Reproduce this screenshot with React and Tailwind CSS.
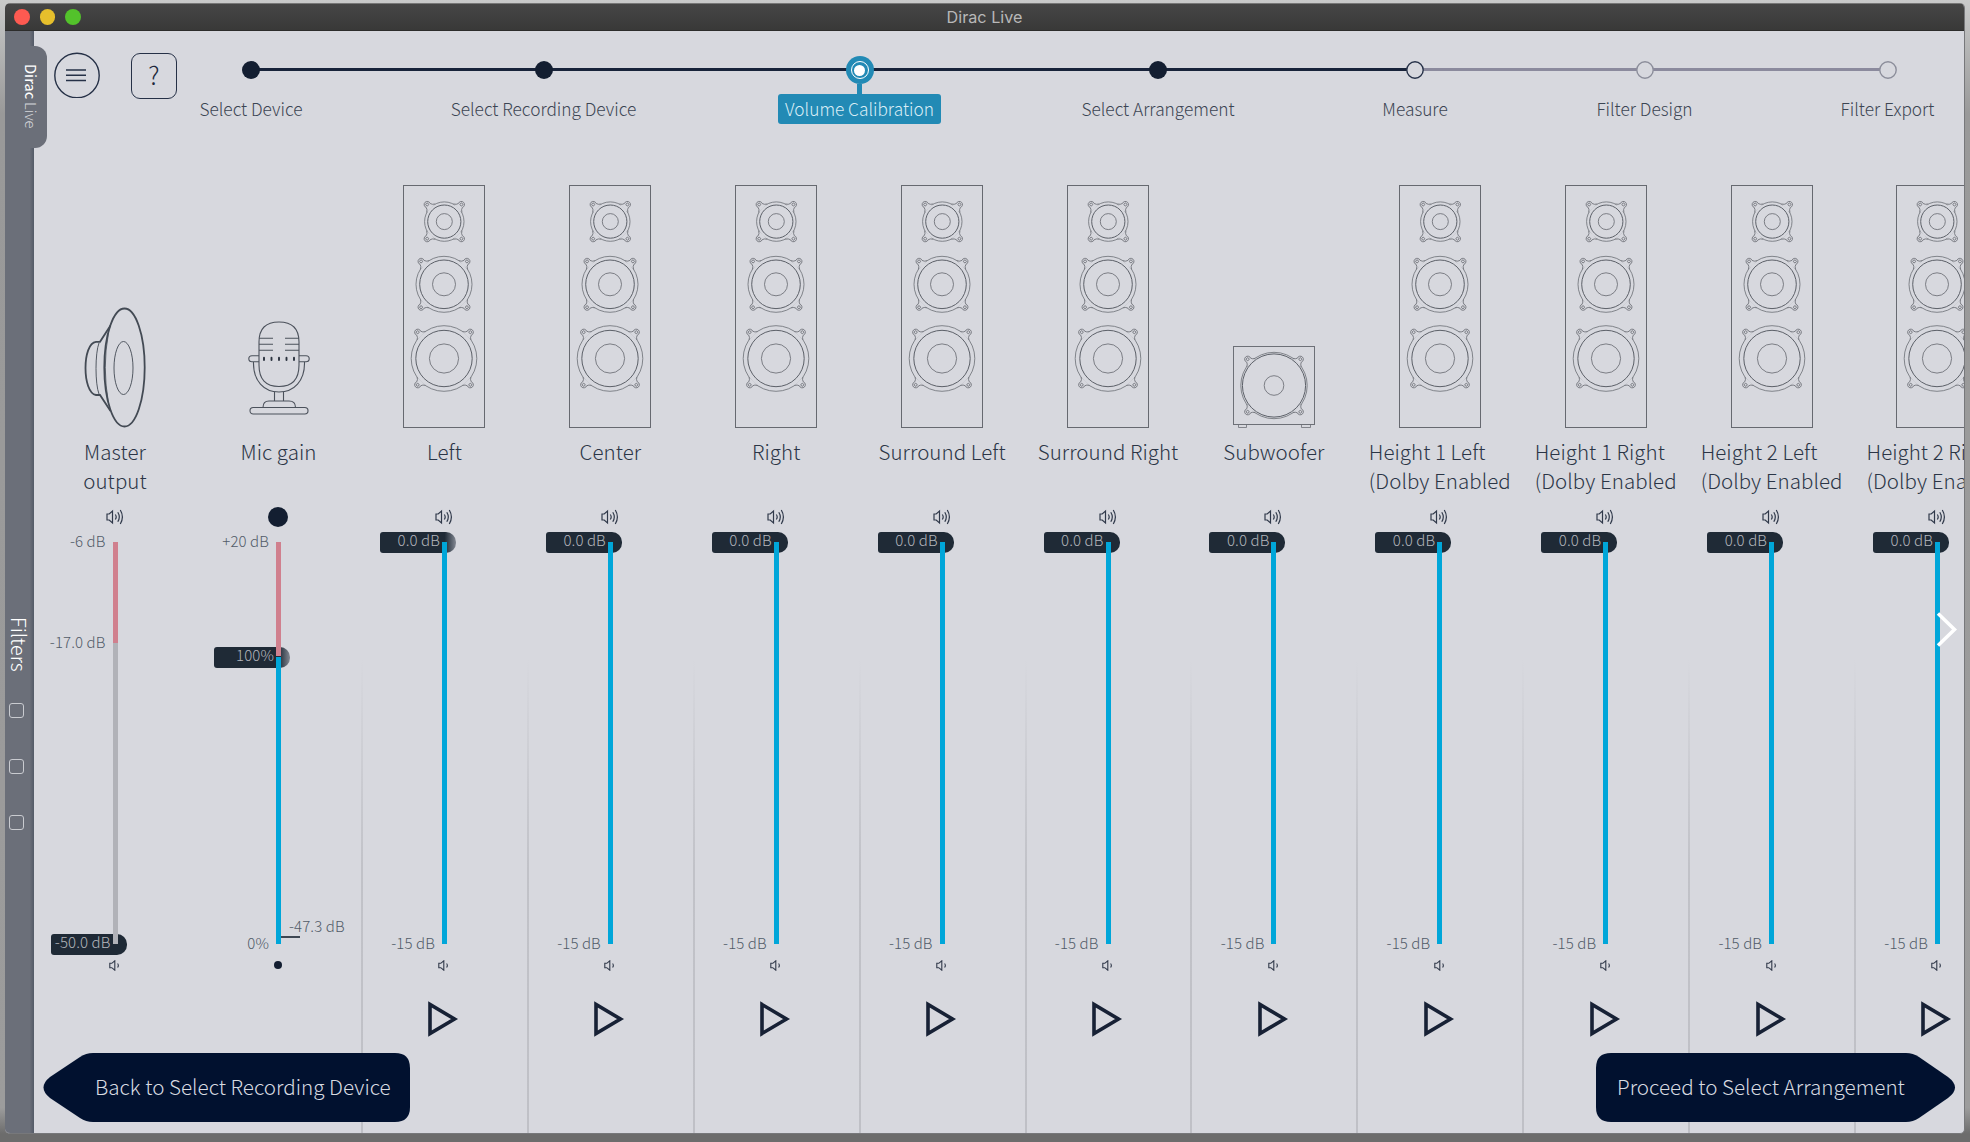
import React from "react";

const BG = "#d7d8de";

const steps = [
  { label: "Select Device", gap: 0, state: "done" },
  { label: "Select Recording Device", gap: 292.5, state: "done" },
  { label: "Volume Calibration", gap: 316, state: "active" },
  { label: "Select Arrangement", gap: 298.5, state: "done" },
  { label: "Measure", gap: 257, state: "next" },
  { label: "Filter Design", gap: 229.5, state: "todo" },
  { label: "Filter Export", gap: 243, state: "todo" },
];

const channels = [
  { name: "Left" },
  { name: "Center" },
  { name: "Right" },
  { name: "Surround Left" },
  { name: "Surround Right" },
  { name: "Subwoofer", sub: true },
  { name: "Height 1 Left", second: "(Dolby Enabled" },
  { name: "Height 1 Right", second: "(Dolby Enabled" },
  { name: "Height 2 Left", second: "(Dolby Enabled" },
  { name: "Height 2 Right", second: "(Dolby Enabled" },
];

function Driver({ cx, cy, inner, mid, outer, ear }) {
  const a = outer - 0.8;
  const e = ear - 1.4;
  const d = `M${a} -6 Q${outer + 0.8} -3.2 ${e} -2.8 A3.1 3.1 0 1 1 ${e} 2.8 Q${outer + 0.8} 3.2 ${a} 6`;
  return (
    <g transform={`translate(${cx} ${cy})`} fill="none" stroke="#6a6d74" strokeWidth="0.8">
      <circle r={outer} />
      {[45, 135, 225, 315].map((r) => (
        <g key={r} transform={`rotate(${r})`}>
          <path d={d} fill={BG} />
          <circle cx={ear} cy="0" r="1.4" />
        </g>
      ))}
      <circle r={mid} strokeWidth="1" stroke="#5c6068" />
      <circle r={inner} strokeWidth="0.85" />
    </g>
  );
}

function Tower() {
  return (
    <svg width="84" height="243" viewBox="0 0 84 243">
      <rect x="1.5" y="0.5" width="81" height="242" fill="none" stroke="#666970" />
      <Driver cx={42.3} cy={36.6} inner={8} mid={16.6} outer={19.7} ear={24.2} />
      <Driver cx={42} cy={99.3} inner={11.5} mid={24.3} outer={28} ear={32.4} />
      <Driver cx={42} cy={173.5} inner={14.6} mid={28.2} outer={32.8} ear={37.2} />
    </svg>
  );
}

function Sub() {
  return (
    <svg width="84" height="243" viewBox="0 0 84 243">
      <g fill="none" stroke="#6d7077">
        <rect x="1.5" y="161.5" width="81" height="78" />
        <path d="M6.500 239.500v3h8v-3M69.500 239.500v3h9v-3" strokeWidth="0.8" />
      </g>
      <Driver cx={42} cy={200.5} inner={9.8} mid={31.6} outer={33.2} ear={37.2} />
    </svg>
  );
}

function MasterIcon() {
  return (
    <svg width="62" height="121" viewBox="0 0 62 121" fill="none" stroke="#434a54" strokeWidth="1.8">
      <ellipse cx="40.500" cy="60.500" rx="20.200" ry="59" />
      <ellipse cx="39.500" cy="61" rx="9.500" ry="26.500" strokeWidth="0.9" />
      <path d="M26.500 18.500L16 34.800H12C-2 36-2 86 12 88H16L26.500 104" />
      <path d="M15 36C11 46 11 77 15 87" strokeWidth="0.9" />
      <path d="M24.500 26Q18 60 24.500 96" strokeWidth="0.8" />
    </svg>
  );
}

function MicIcon() {
  return (
    <svg className="mb-[13px]" width="62" height="94" viewBox="0 0 62 94" fill="none" stroke="#4b515b" strokeWidth="1.100">
      <path d="M11 21Q11 1 31 1T51 21V44Q51 65.500 31 65.500T11 44Z" />
      <path d="M11 17.200h14M11 23.200h14M11 29.200h14M37 17.200h14M37 23.200h14M37 29.200h14" />
      <path d="M16 36.800v2.200M23.500 36.800v2.200M31 36.800v2.200M38.500 36.800v2.200M46 36.800v2.200" strokeWidth="1.900" strokeLinecap="round" stroke="#2b333f" />
      <path d="M11 34.800H4Q.8 34.800.8 37.800T4 40.800H11M51 34.800h7q3.200 0 3.200 3t-3.200 3h-7" />
      <path d="M5.500 41C5 60 16 71 31 71S57 60 56.500 41" />
      <path d="M26.500 71v9M35.500 71v9M15 86.500Q15 80 21 80H41Q47.500 80 47.500 86.500" />
      <rect x="2" y="86.500" width="58" height="6.500" rx="3.200" />
    </svg>
  );
}

function VolHigh() {
  return (
    <svg width="18" height="16" viewBox="0 0 18 16" fill="none" stroke="#30394a" strokeWidth="1.200">
      <path d="M1 5h2.200L6.500 2v12L3.200 11H1z" />
      <path d="M9.300 5.500q1.800 2.500 0 5M11.800 3.200q3 4.800 0 9.600M14.300 1q4.200 7 0 14" />
    </svg>
  );
}

function VolLow() {
  return (
    <svg width="11" height="11" viewBox="0 0 11 11" fill="none" stroke="#30394a" strokeWidth="1.100">
      <path d="M.8 3.300h2L5.800.8v9.400L2.800 7.700H.8zM8.600 3.500q1.500 2 0 4" />
    </svg>
  );
}

const dbText = "absolute right-[12px] text-[15px] leading-5 whitespace-nowrap tracking-[0.1px] text-[#515b68]";

function Thumb({ top, text, soft }) {
  return (
    <div
      className={
        "absolute right-[-9px] h-[21px] w-[76px] rounded-l-[3px] rounded-r-[10px] " +
        (soft ? "bg-linear-to-r from-[#1f2a36] from-85% to-[#848993]" : "bg-[#1f2a36]")
      }
      style={{ top }}
    >
      <span className="absolute right-[16px] top-[-2px] text-[15px] leading-5 tracking-[0.1px] whitespace-nowrap text-[#b4b6bc]">{text}</span>
    </div>
  );
}

function Slider({ children, bar }) {
  return (
    <div className="relative mt-[15px] flex h-[402px] w-[5px] flex-col">
      {children}
      {bar}
    </div>
  );
}

function Column({ icon, label, top, slider, low, play }) {
  return (
    <div className="flex min-w-0 flex-1 flex-col items-center pr-px">
      <div className="flex h-[243px] items-end">{icon}</div>
      <div className="mt-[9px] h-[60px] text-[20.500px] leading-[29px] tracking-[0.05px] whitespace-nowrap text-[#2b3546]">{label}</div>
      <div className="mt-[10px] mr-px flex h-[20px] items-center">{top}</div>
      {slider}
      <div className="mt-[11px] mr-px flex h-[20px] items-center">{low}</div>
      {play}
    </div>
  );
}

function Channel({ ch, soft }) {
  return (
    <div className="flex w-[165.9px] shrink-0">
      <div className="w-[2px] shrink-0 bg-linear-to-b from-transparent from-50% via-[#c1c2c8] via-72% to-[#bfc0c6]" />
      <Column
        icon={ch.sub ? <Sub /> : <Tower />}
        label={
          <>
            <div>{ch.name}</div>
            {ch.second && <div>{ch.second}</div>}
          </>
        }
        top={<VolHigh />}
        slider={
          <Slider bar={<div className="relative h-full w-full bg-[#00a6d9]" />}>
            <Thumb top={-10} text="0.0 dB" soft={soft} />
            <span className={dbText + " bottom-[-9px]"}>-15 dB</span>
          </Slider>
        }
        low={<VolLow />}
        play={
          <svg className="mt-[25px] mr-[2px]" width="32" height="38" viewBox="0 0 32 38">
            <path d="M3 4.500V33.500L27.500 19Z" fill="none" stroke="#172135" strokeWidth="3.600" />
          </svg>
        }
      />
    </div>
  );
}

function StepDot({ state }) {
  if (state === "active")
    return (
      <div className="flex size-7 items-center justify-center rounded-full bg-[#228ab5]">
        <div className="flex size-[18px] items-center justify-center rounded-full border-[1.500px] border-white">
          <div className="size-[11px] rounded-full bg-white" />
        </div>
      </div>
    );
  if (state === "done") return <div className="size-[18px] rounded-full bg-[#131e31]" />;
  return (
    <svg width="18" height="18" viewBox="0 0 18 18">
      <circle cx="9" cy="9" r="8.200" fill={BG} stroke={state === "next" ? "#28334a" : "#8c8e9b"} strokeWidth="1.400" />
    </svg>
  );
}

function Steps() {
  return (
    <div className="flex">
      {steps.map((s) => (
        <React.Fragment key={s.label}>
          <div className={"mt-[12px] h-[3px] " + (s.state === "todo" ? "bg-[#8b8a9d]" : "bg-[#18233a]")} style={{ width: s.gap }} />
          <div className="relative flex w-0 flex-col items-center">
            <div className="flex h-7 items-center">
              <StepDot state={s.state} />
            </div>
            <div className={"h-[10px] w-[5px] " + (s.state === "active" ? "bg-[#228ab5]" : "")} />
            <div
              className={
                "flex h-[30px] items-center rounded-[3px] px-[7px] text-[17.300px] leading-[30px] whitespace-nowrap " +
                (s.state === "active" ? "bg-[#228ab5] text-[#d9edf5]" : "text-[#3c4553]")
              }
            >
              {s.label}
            </div>
          </div>
        </React.Fragment>
      ))}
    </div>
  );
}

function Sidebar() {
  return (
    <aside className="relative z-10 w-[29px] shrink-0 bg-linear-to-r from-[#6b6f79] from-85% to-[#535a67] text-white">
      <div className="mt-[15px] flex h-[102px] w-[42px] items-center justify-center rounded-r-[12px] bg-[#6b6f79] pr-0 pb-[2px] pl-[9px]">
        <div className="text-[14.700px] leading-5 [writing-mode:vertical-rl]">
          <span className="font-normal">Dirac</span> <span className="ml-[-2px] text-[#d5d7db]">Live</span>
        </div>
      </div>
      <div className="mt-[469px] flex w-[25px] flex-col items-center pl-0.5">
        <div className="h-[61px] text-[20px] leading-6 [writing-mode:vertical-rl]">Filters</div>
        <div className="mt-[25px] ml-[-5px] flex flex-col gap-[41px]">
          <div className="size-[15px] rounded-[3px] border border-[#c9cbd0]" />
          <div className="size-[15px] rounded-[3px] border border-[#c9cbd0]" />
          <div className="size-[15px] rounded-[3px] border border-[#c9cbd0]" />
        </div>
      </div>
    </aside>
  );
}

export default function App() {
  return (
    <div className="h-[1142px] w-[1970px] overflow-hidden bg-[linear-gradient(to_bottom,#c9caca,#999999_10%,#9c9c9c_97%,#6c6c6c_99.3%)] pt-[3px] pl-[5px] font-['Noto_Sans_CJK_SC','Open_Sans',sans-serif] font-light">
      <div className="flex h-[1131px] w-[1960px] flex-col overflow-hidden rounded-[5px] border-r border-b border-[#77787b] bg-[#d7d8de]">
        <header className="relative flex h-[28px] shrink-0 items-center justify-center border-t border-b border-t-[#777777] border-b-[#2c2c2b] bg-linear-to-b from-[#464646] to-[#393938]">
          <div className="absolute left-[9px] flex gap-[10px]">
            <div className="size-[15.500px] rounded-full bg-[#fd5a51]" />
            <div className="size-[15.500px] rounded-full bg-[#e6bf2c]" />
            <div className="size-[15.500px] rounded-full bg-[#53c22b]" />
          </div>
          <div className="font-['Inter',sans-serif] text-[16.200px] font-normal text-[#b8b8b8]">Dirac Live</div>
        </header>
        <div className="flex min-h-0 flex-1">
          <Sidebar />
          <main className="relative flex min-w-0 flex-1 flex-col overflow-hidden">
            <div className="flex h-[154px] shrink-0">
              <button className="mt-[21px] ml-[20px] flex size-[46px] items-center justify-center">
                <svg width="46" height="46" viewBox="0 0 46 46" fill="none" stroke="#263147" strokeWidth="1.400">
                  <circle cx="23" cy="23.500" r="22.200" />
                  <path d="M12 18H32M12 23.300H32M12 28.500H32" />
                </svg>
              </button>
              <button className="mt-[22px] ml-[31px] flex size-[46px] items-center justify-center rounded-[9px] border border-[#263147] pb-[3px] text-[25px] leading-none font-extralight text-[#1e283b]">?</button>
              <div className="mt-[25px] ml-[74px]">
                <Steps />
              </div>
            </div>
            <div className="flex min-h-0 flex-1">
              <div className="flex w-[163px] shrink-0">
                <Column
                  icon={<MasterIcon />}
                  label={<div className="text-center">Master<br />output</div>}
                  top={<VolHigh />}
                  slider={
                    <Slider
                      bar={
                        <div className="relative flex h-full flex-col">
                          <div className="h-[101px] bg-[#d0808e]" />
                          <div className="flex-1 bg-[#b1b2b8]" />
                        </div>
                      }
                    >
                      <span className={dbText + " top-[-11px]"}>-6 dB</span>
                      <span className={dbText + " top-[90px]"}>-17.0 dB</span>
                      <Thumb top={392} text="-50.0 dB" />
                    </Slider>
                  }
                  low={<VolLow />}
                />
              </div>
              <div className="flex w-[164px] shrink-0">
                <Column
                  icon={<MicIcon />}
                  label="Mic gain"
                  top={<div className="size-[20px] rounded-full bg-[#131e31]" />}
                  slider={
                    <Slider
                      bar={
                        <div className="relative flex h-full flex-col">
                          <div className="h-[114px] bg-[#d0808e]" />
                          <div className="h-px bg-[#1f2a36]" />
                          <div className="flex-1 bg-[#00a6d9]" />
                        </div>
                      }
                    >
                      <span className={dbText + " top-[-11px]"}>+20 dB</span>
                      <Thumb top={105} text="100%" soft />
                      <span className={dbText + " bottom-[-9px]"}>0%</span>
                      <div className="absolute bottom-[6px] left-[4px] h-[2px] w-[20px] bg-[#3d4652]" />
                      <span className="absolute bottom-[8px] left-[13px] text-[15px] leading-5 tracking-[0.1px] whitespace-nowrap text-[#515b68]">-47.3 dB</span>
                    </Slider>
                  }
                  low={<div className="size-[8px] rounded-full bg-[#131e31]" />}
                />
              </div>
              {channels.map((c, i) => (
                <Channel key={c.name} ch={c} soft={i === 0} />
              ))}
            </div>
            <svg className="absolute top-[580px] left-[1900px]" width="26" height="38" viewBox="0 0 26 38">
              <path d="M4 2.500L20.500 18.500L4 34.500" fill="none" stroke="#fff" strokeWidth="3.500" />
            </svg>
            <button className="absolute bottom-[11.500px] left-[9px] flex h-[69px] w-[367px] items-center">
              <svg className="absolute inset-0" width="367" height="69" viewBox="0 0 367 69">
                <path d="M50 0H352Q367 0 367 15V54Q367 69 352 69H50Q43 69 37 65L7 45Q-6 34.500 7 24L37 4Q43 0 50 0Z" fill="#01112f" />
              </svg>
              <span className="relative mb-[2px] ml-[52px] text-[20.650px] whitespace-nowrap text-[#d8dbe1]">Back to Select Recording Device</span>
            </button>
            <button className="absolute bottom-[11.500px] left-[1562px] flex h-[69px] w-[360px] items-center">
              <svg className="absolute inset-0" width="360" height="69" viewBox="0 0 360 69">
                <path d="M310 0H15Q0 0 0 15V54Q0 69 15 69H310Q317 69 323 65L352 45Q366 34.500 352 24L323 4Q317 0 310 0Z" fill="#01112f" />
              </svg>
              <span className="relative mb-[2px] ml-[21px] text-[20.650px] whitespace-nowrap text-[#d8dbe1]">Proceed to Select Arrangement</span>
            </button>
          </main>
        </div>
      </div>
    </div>
  );
}
